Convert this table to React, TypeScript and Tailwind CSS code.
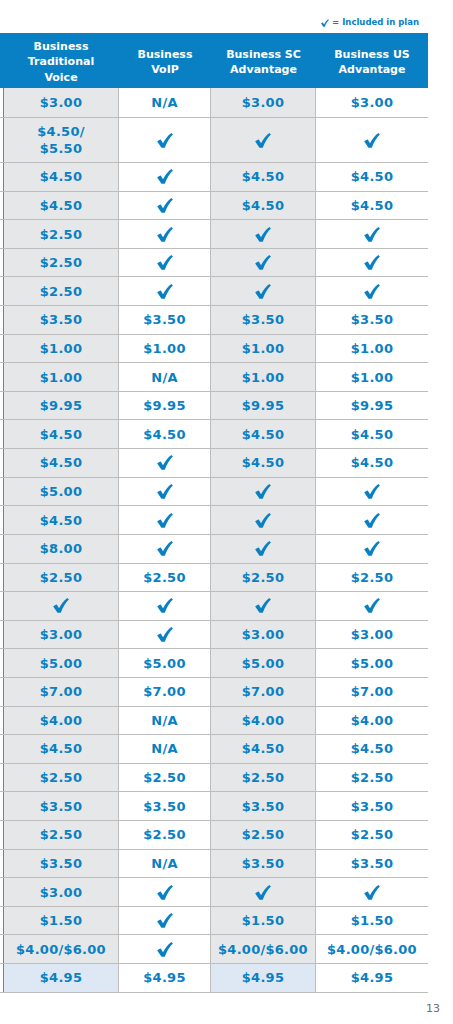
import React from 'react';

type Cell = string;

const CHECK = '✓';

// rows of the pricing table: traditional, voip, sc advantage, us advantage
const rows: Cell[][] = [
  ['$3.00', 'N/A', '$3.00', '$3.00'],
  ['$4.50/\n$5.50', CHECK, CHECK, CHECK],
  ['$4.50', CHECK, '$4.50', '$4.50'],
  ['$4.50', CHECK, '$4.50', '$4.50'],
  ['$2.50', CHECK, CHECK, CHECK],
  ['$2.50', CHECK, CHECK, CHECK],
  ['$2.50', CHECK, CHECK, CHECK],
  ['$3.50', '$3.50', '$3.50', '$3.50'],
  ['$1.00', '$1.00', '$1.00', '$1.00'],
  ['$1.00', 'N/A', '$1.00', '$1.00'],
  ['$9.95', '$9.95', '$9.95', '$9.95'],
  ['$4.50', '$4.50', '$4.50', '$4.50'],
  ['$4.50', CHECK, '$4.50', '$4.50'],
  ['$5.00', CHECK, CHECK, CHECK],
  ['$4.50', CHECK, CHECK, CHECK],
  ['$8.00', CHECK, CHECK, CHECK],
  ['$2.50', '$2.50', '$2.50', '$2.50'],
  [CHECK, CHECK, CHECK, CHECK],
  ['$3.00', CHECK, '$3.00', '$3.00'],
  ['$5.00', '$5.00', '$5.00', '$5.00'],
  ['$7.00', '$7.00', '$7.00', '$7.00'],
  ['$4.00', 'N/A', '$4.00', '$4.00'],
  ['$4.50', 'N/A', '$4.50', '$4.50'],
  ['$2.50', '$2.50', '$2.50', '$2.50'],
  ['$3.50', '$3.50', '$3.50', '$3.50'],
  ['$2.50', '$2.50', '$2.50', '$2.50'],
  ['$3.50', 'N/A', '$3.50', '$3.50'],
  ['$3.00', CHECK, CHECK, CHECK],
  ['$1.50', CHECK, '$1.50', '$1.50'],
  ['$4.00/$6.00', CHECK, '$4.00/$6.00', '$4.00/$6.00'],
  ['$4.95', '$4.95', '$4.95', '$4.95'],
];

const CheckMark: React.FC<{ className?: string }> = ({ className = 'w-[16px] h-[15px]' }) => (
  <svg viewBox="0 0 16 15" className={className} fill="#0a80c4">
    <path d="M0.2 8.6 C1.3 7.4 2.6 6.7 3.8 6.5 L6.0 10.3 C8.2 6.3 11.0 2.6 14.3 0.1 L15.9 1.6 C12.6 4.8 9.8 9.2 7.8 14.8 L4.5 14.8 Z" />
  </svg>
);

const Value: React.FC<{ value: Cell }> = ({ value }) => {
  if (value === CHECK) return <CheckMark />;
  return <span className="whitespace-pre-line text-center leading-[17px] tracking-[0.02em]">{value}</span>;
};

const App: React.FC = () => {
  const headers = ['Business\nTraditional\nVoice', 'Business\nVoIP', 'Business SC\nAdvantage', 'Business US\nAdvantage'];

  return (
    <div
      className="w-[453px] h-[1024px] bg-white text-[#0a80c4]"
      style={{ fontFamily: '"DejaVu Sans", sans-serif' }}
    >
      {/* Legend */}
      <div className="h-[33px] flex items-end justify-end pr-[34px] pb-[4px]">
        <div className="flex items-center gap-[3px] text-[8.5px] font-bold">
          <CheckMark className="w-[8px] h-[8px]" />
          <span>= Included in plan</span>
        </div>
      </div>

      <div className="w-[428px]">
        {/* Header */}
        <div className="grid grid-cols-[3px_116px_92px_105px_112px] h-[55px] pt-[3px] bg-[#0a80c4] text-white text-[11px] font-bold leading-[15.5px]">
          <div />
          {headers.map((h) => (
            <div key={h} className="flex items-center justify-center text-center whitespace-pre-line">
              {h}
            </div>
          ))}
        </div>

        {/* Body */}
        {rows.map((row, i) => {
          const isLast = i === rows.length - 1;
          const height = i === 1 ? 'h-[45px]' : i === 0 ? 'h-[30px]' : 'h-[28.62px]';
          const shade = isLast ? 'bg-[#dee8f4]' : 'bg-[#e6e7e8]';
          return (
            <div
              key={i}
              className={`grid grid-cols-[3px_116px_92px_105px_112px] ${height} border-b border-[#bdbdbd] text-[13px] font-bold`}
            >
              <div />
              <div className={`flex items-center justify-center border-l border-l-[#4f8cc4] border-r border-r-[#bdbdbd] ${shade}`}>
                <Value value={row[0]} />
              </div>
              <div className="flex items-center justify-center border-r border-[#bdbdbd]">
                <Value value={row[1]} />
              </div>
              <div className={`flex items-center justify-center border-r border-[#bdbdbd] ${shade}`}>
                <Value value={row[2]} />
              </div>
              <div className="flex items-center justify-center">
                <Value value={row[3]} />
              </div>
            </div>
          );
        })}
      </div>

      {/* Page number */}
      <div className="flex justify-end pr-[13px] pt-[8px] text-[11px] text-[#6d6e71]">13</div>
    </div>
  );
};

export default App;
